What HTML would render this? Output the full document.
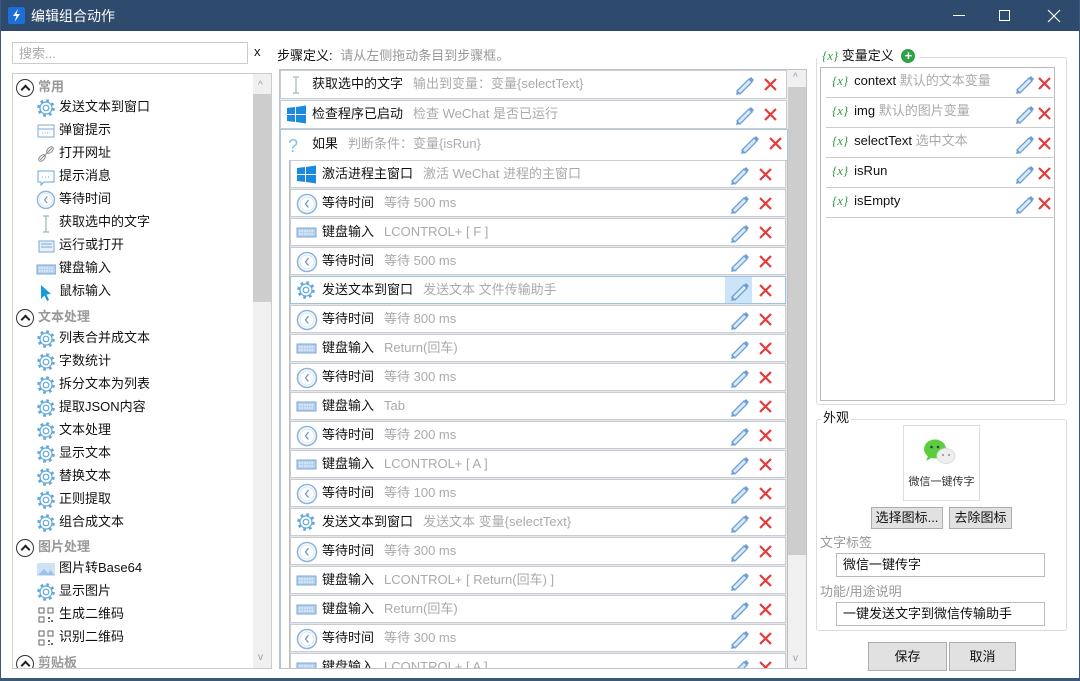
<!DOCTYPE html>
<html><head><meta charset="utf-8"><style>
*{box-sizing:border-box;margin:0;padding:0}
html,body{width:1080px;height:681px;overflow:hidden}
body{background:#fff;font-family:"Liberation Sans","Noto Sans CJK SC",sans-serif;font-size:13px;color:#111;position:relative}
.abs{position:absolute}
#frame{position:absolute;left:0;top:0;width:1080px;height:681px;border:1px solid #3b5878;border-top:none}
#title{position:absolute;left:0;top:0;width:1080px;height:31px;background:#2e4a6d;color:#fff;font-size:14px}
.li{position:absolute;left:36px;height:22px;line-height:22px;white-space:nowrap}
.li svg{vertical-align:middle;margin-right:3px}
.cat{position:absolute;left:16px;width:200px;height:22px;line-height:22px;color:#999;font-weight:bold;white-space:nowrap}
.cat i{display:inline-block;width:18px;height:18px;border:1.5px solid #333;border-radius:50%;vertical-align:middle;margin-right:4px;position:relative}
.cat i:after{content:"";position:absolute;left:5px;top:6px;width:5px;height:5px;border-left:2px solid #222;border-top:2px solid #222;transform:rotate(45deg)}
.row{position:absolute;height:28px;background:#fff;border:1px solid #c9cdd2;line-height:26px;white-space:nowrap}
.row .ic{position:absolute;left:5px;top:3px}
.row .t{position:absolute;left:31px}
.row .d{color:#aaa;margin-left:10px}
.row .p{position:absolute;top:3px}
.row .x{position:absolute;top:5px}
.var{position:absolute;left:826px;width:229px;height:30px;border-bottom:1px solid #ccc;line-height:26px;white-space:nowrap}
.var .b{color:#3a9a48;font-family:"Liberation Serif",serif;font-style:italic;margin:0 6px 0 6px}
.var .g{color:#aaa}
.btn{position:absolute;background:#e1e1e1;border:1px solid #adadad;text-align:center}
.inp{position:absolute;border:1px solid #bbb;background:#fff;padding-left:6px;line-height:21px;white-space:nowrap}
</style></head><body>
<svg width="0" height="0" style="position:absolute">
<defs>
<g id="pen"><path d="M3 17 L15 5 L18 8 L6 20 Z" fill="#dbe9f8" stroke="#6b9fd8" stroke-width="1.3"/><path d="M15 5 L17 3 L20 6 L18 8" fill="#6b9fd8"/><path d="M3 17 L2 21 L6 20" fill="#6b9fd8"/></g>
<g id="xx"><path d="M3 3 L14 14 M14 3 L3 14" stroke="#e53b3b" stroke-width="2.2"/></g>
<g id="clk"><circle cx="11" cy="11" r="9.5" fill="#fff" stroke="#8fb4dc" stroke-width="1.6"/><circle cx="11" cy="11" r="7" fill="none" stroke="#d6e5f4" stroke-width="1"/><path d="M12.5 7 L9.5 11 L12.5 14.5" fill="none" stroke="#6c92bb" stroke-width="1.2"/></g>
<g id="gear"><circle cx="10" cy="10" r="7.5" fill="none" stroke="#5fa8dc" stroke-width="2.6" stroke-dasharray="2.7 3.2"/><circle cx="10" cy="10" r="6" fill="#fff" stroke="#5fa8dc" stroke-width="1.2"/><circle cx="10" cy="10" r="2.8" fill="none" stroke="#5fa8dc" stroke-width="1.2"/></g>
<g id="kb"><rect x="1" y="6" width="19" height="9" fill="#b5d1ee" stroke="#7aa8d8"/><path d="M3 9h15M3 12h15" stroke="#fff" stroke-width="1" stroke-dasharray="1.5 1"/></g>
<g id="win"><path d="M1 4 L9 3 L9 10 L1 10 Z M10 3 L20 1.5 L20 10 L10 10 Z M1 11 L9 11 L9 18 L1 17 Z M10 11 L20 11 L20 19.5 L10 18 Z" fill="#1b8be0"/></g>
<g id="cur"><path d="M10 3 L10 19 M7 3 L13 3 M7 19 L13 19" stroke="#8aa" stroke-width="1"/></g>
</defs></svg>

<div id="title">
 <div class="abs" style="left:8px;top:7px;width:17px;height:17px;background:#1c6fd6;border-radius:2px"><svg width="17" height="17"><path d="M10 2 L5 9 L8.5 9 L6.5 15 L12 7 L8.5 7 Z" fill="#fff"/></svg></div>
 <div class="abs" style="left:31px;top:6px">编辑组合动作</div>
 <div class="abs" style="left:953px;top:15px;width:12px;height:1px;background:#fff"></div>
 <div class="abs" style="left:999px;top:10px;width:11px;height:11px;border:1px solid #fff"></div>
 <svg class="abs" style="left:1047px;top:9px" width="14" height="14"><path d="M1 1 L13 13 M13 1 L1 13" stroke="#fff" stroke-width="1.2"/></svg>
</div>
<div id="frame"></div>

<!-- left -->
<div class="inp" style="left:12px;top:42px;width:236px;height:22px;color:#aaa;border-color:#ccc">搜索...</div>
<div class="abs" style="left:254px;top:44px;font-size:13px">x</div>
<div class="abs" style="left:12px;top:73px;width:260px;height:596px;border:1px solid #ccc;overflow:hidden">
 <div class="abs" style="left:240px;top:0;width:18px;height:596px;background:#f0f0f0"></div>
 <div class="abs" style="left:240px;top:20px;width:18px;height:208px;background:#cdcdcd"></div>
 <div class="abs" style="left:245px;top:6px;color:#999;font-size:10px">^</div>
 <div class="abs" style="left:245px;top:578px;color:#999;font-size:10px">v</div>
</div>
<div class="abs" style="left:0;top:0;width:272px;height:668px;overflow:hidden">
<div class="cat" style="top:76px"><i></i>常用</div>
<div class="li" style="top:96px"><svg width="20" height="20"><use href="#gear"/></svg>发送文本到窗口</div>
<div class="li" style="top:119px"><svg width="20" height="20"><rect x="2" y="4" width="16" height="12" fill="#fff" stroke="#7aa8d8"/><path d="M2 8h16" stroke="#7aa8d8"/><path d="M6 12h8" stroke="#7aa8d8" stroke-dasharray="1 1.5"/></svg>弹窗提示</div>
<div class="li" style="top:142px"><svg width="20" height="20"><path d="M4 16 L16 4" stroke="#888" stroke-width="1"/><ellipse cx="6" cy="14" rx="4" ry="2.4" transform="rotate(-45 6 14)" fill="none" stroke="#888"/><ellipse cx="14" cy="6" rx="4" ry="2.4" transform="rotate(-45 14 6)" fill="none" stroke="#888"/></svg>打开网址</div>
<div class="li" style="top:165px"><svg width="20" height="20"><path d="M2 4h16v11H8l-3 3v-3H2z" fill="#fff" stroke="#5fa8dc"/><path d="M6 10h8" stroke="#5fa8dc" stroke-dasharray="1 2"/></svg>提示消息</div>
<div class="li" style="top:188px"><svg width="20" height="20"><use href="#clk" transform="scale(.9)"/></svg>等待时间</div>
<div class="li" style="top:211px"><svg width="20" height="20"><use href="#cur"/></svg>获取选中的文字</div>
<div class="li" style="top:234px"><svg width="20" height="20"><rect x="3" y="5" width="15" height="11" fill="#e8f1fa" stroke="#7aa8d8"/><path d="M5 8h11M5 11h11" stroke="#7aa8d8"/></svg>运行或打开</div>
<div class="li" style="top:257px"><svg width="20" height="20"><use href="#kb"/></svg>键盘输入</div>
<div class="li" style="top:280px"><svg width="20" height="20"><path d="M5 3 L5 17 L8.5 13.5 L11 19 L13 18 L10.5 12.5 L15 12 Z" fill="#1a9ad6"/></svg>鼠标输入</div>
<div class="cat" style="top:306px"><i></i>文本处理</div>
<div class="li" style="top:327px"><svg width="20" height="20"><use href="#gear"/></svg>列表合并成文本</div>
<div class="li" style="top:350px"><svg width="20" height="20"><use href="#gear"/></svg>字数统计</div>
<div class="li" style="top:373px"><svg width="20" height="20"><use href="#gear"/></svg>拆分文本为列表</div>
<div class="li" style="top:396px"><svg width="20" height="20"><use href="#gear"/></svg>提取JSON内容</div>
<div class="li" style="top:419px"><svg width="20" height="20"><use href="#gear"/></svg>文本处理</div>
<div class="li" style="top:442px"><svg width="20" height="20"><use href="#gear"/></svg>显示文本</div>
<div class="li" style="top:465px"><svg width="20" height="20"><use href="#gear"/></svg>替换文本</div>
<div class="li" style="top:488px"><svg width="20" height="20"><use href="#gear"/></svg>正则提取</div>
<div class="li" style="top:511px"><svg width="20" height="20"><use href="#gear"/></svg>组合成文本</div>
<div class="cat" style="top:536px"><i></i>图片处理</div>
<div class="li" style="top:557px"><svg width="20" height="20"><rect x="1" y="4" width="18" height="13" fill="#cfe2f5"/><path d="M2 16 L8 10 L12 14 L15 11 L18 16 Z" fill="#9cc2e8"/></svg>图片转Base64</div>
<div class="li" style="top:580px"><svg width="20" height="20"><use href="#gear"/></svg>显示图片</div>
<div class="li" style="top:603px"><svg width="20" height="20"><path d="M3 3h5v5H3zM12 3h5v5h-5zM3 12h5v5H3z" fill="none" stroke="#666"/><path d="M12 12h2v2h-2zM15 15h2v2h-2zM12 16h2v1h-2z" fill="#666"/></svg>生成二维码</div>
<div class="li" style="top:626px"><svg width="20" height="20"><path d="M3 3h5v5H3zM12 3h5v5h-5zM3 12h5v5H3z" fill="none" stroke="#666"/><path d="M12 12h2v2h-2zM15 15h2v2h-2zM12 16h2v1h-2z" fill="#666"/></svg>识别二维码</div>
<div class="cat" style="top:652px"><i></i>剪贴板</div>
</div>
<div class="abs" style="left:0;top:669px;width:1080px;height:12px;background:#fff"></div>
<div class="abs" style="left:0;top:678px;width:1080px;height:3px;background:#3b5878"></div>
<div class="abs" style="left:0;top:31px;width:1px;height:650px;background:#3b5878"></div>
<div class="abs" style="left:1079px;top:31px;width:1px;height:650px;background:#3b5878"></div>
<div class="abs" style="left:12px;top:668px;width:260px;height:1px;background:#ccc"></div>

<!-- middle -->
<div class="abs" style="left:277px;top:45px;white-space:nowrap">步骤定义: <span style="color:#999;margin-left:4px">请从左侧拖动条目到步骤框。</span></div>
<div class="abs" style="left:279px;top:69px;width:528px;height:600px;border:1px solid #bcc3ca;background:#e9eef3;overflow:hidden">
 <div class="abs" style="left:508px;top:0;width:18px;height:598px;background:#f0f0f0"></div>
 <div class="abs" style="left:508px;top:17px;width:18px;height:468px;background:#cdcdcd"></div>
 <div class="abs" style="left:513px;top:2px;color:#999;font-size:10px">^</div>
 <div class="abs" style="left:513px;top:583px;color:#999;font-size:10px">v</div>
 <div class="row" style="left:0;top:0;width:507px;height:29px"><svg class="ic" width="20" height="20"><use href="#cur"/></svg><span class="t">获取选中的文字<span class="d">输出到变量：变量{selectText}</span></span><svg class="p" style="left:453px" width="22" height="22"><use href="#pen"/></svg><svg class="x" style="left:481px" width="17" height="17"><use href="#xx"/></svg></div>
 <div class="row" style="left:0;top:30px;width:507px;height:29px"><svg class="ic" width="20" height="20"><use href="#win"/></svg><span class="t">检查程序已启动<span class="d">检查 WeChat 是否已运行</span></span><svg class="p" style="left:453px" width="22" height="22"><use href="#pen"/></svg><svg class="x" style="left:481px" width="17" height="17"><use href="#xx"/></svg></div>
 <div class="abs" style="left:0;top:59px;width:508px;height:560px;background:#fff;border:1px solid #a9c6da">
  <div class="abs" style="left:3px;top:2px;line-height:24px;white-space:nowrap"><svg width="20" height="20" style="vertical-align:middle"><text x="4" y="17" font-size="18" fill="#7cc4ea" font-family="Liberation Sans">?</text></svg><span style="margin-left:8px">如果</span><span style="color:#aaa;margin-left:10px">判断条件：变量{isRun}</span></div>
  <svg class="abs" style="left:458px;top:3px" width="22" height="22"><use href="#pen"/></svg><svg class="abs" style="left:486px;top:5px" width="17" height="17"><use href="#xx"/></svg>
  <div class="abs" style="left:8px;top:30px;width:499px;height:540px;background:#e4e8ec;border:1px solid #bbb"></div>
 </div>
 <div class="abs" style="left:10px;top:90px">
  <div class="row" style="left:0;top:0;width:496px"><svg class="ic" width="22" height="22"><use href="#win"/></svg><span class="t">激活进程主窗口<span class="d">激活 WeChat 进程的主窗口</span></span><svg class="p" style="left:438px" width="22" height="22"><use href="#pen"/></svg><svg class="x" style="left:466px" width="17" height="17"><use href="#xx"/></svg></div>
  <div class="row" style="left:0;top:29px;width:496px"><svg class="ic" width="22" height="22"><use href="#clk"/></svg><span class="t">等待时间<span class="d">等待 500 ms</span></span><svg class="p" style="left:438px" width="22" height="22"><use href="#pen"/></svg><svg class="x" style="left:466px" width="17" height="17"><use href="#xx"/></svg></div>
  <div class="row" style="left:0;top:58px;width:496px"><svg class="ic" width="22" height="22"><use href="#kb"/></svg><span class="t">键盘输入<span class="d">LCONTROL+ [ F ]</span></span><svg class="p" style="left:438px" width="22" height="22"><use href="#pen"/></svg><svg class="x" style="left:466px" width="17" height="17"><use href="#xx"/></svg></div>
  <div class="row" style="left:0;top:87px;width:496px"><svg class="ic" width="22" height="22"><use href="#clk"/></svg><span class="t">等待时间<span class="d">等待 500 ms</span></span><svg class="p" style="left:438px" width="22" height="22"><use href="#pen"/></svg><svg class="x" style="left:466px" width="17" height="17"><use href="#xx"/></svg></div>
  <div class="row" style="left:0;top:116px;width:496px;border-color:#9fc3dd"><div class="abs" style="left:434px;top:0;width:27px;height:26px;background:#cce4f7"></div><svg class="ic" width="22" height="22"><use href="#gear"/></svg><span class="t">发送文本到窗口<span class="d">发送文本 文件传输助手</span></span><svg class="p" style="left:438px" width="22" height="22"><use href="#pen"/></svg><svg class="x" style="left:466px" width="17" height="17"><use href="#xx"/></svg></div>
  <div class="row" style="left:0;top:145px;width:496px"><svg class="ic" width="22" height="22"><use href="#clk"/></svg><span class="t">等待时间<span class="d">等待 800 ms</span></span><svg class="p" style="left:438px" width="22" height="22"><use href="#pen"/></svg><svg class="x" style="left:466px" width="17" height="17"><use href="#xx"/></svg></div>
  <div class="row" style="left:0;top:174px;width:496px"><svg class="ic" width="22" height="22"><use href="#kb"/></svg><span class="t">键盘输入<span class="d">Return(回车)</span></span><svg class="p" style="left:438px" width="22" height="22"><use href="#pen"/></svg><svg class="x" style="left:466px" width="17" height="17"><use href="#xx"/></svg></div>
  <div class="row" style="left:0;top:203px;width:496px"><svg class="ic" width="22" height="22"><use href="#clk"/></svg><span class="t">等待时间<span class="d">等待 300 ms</span></span><svg class="p" style="left:438px" width="22" height="22"><use href="#pen"/></svg><svg class="x" style="left:466px" width="17" height="17"><use href="#xx"/></svg></div>
  <div class="row" style="left:0;top:232px;width:496px"><svg class="ic" width="22" height="22"><use href="#kb"/></svg><span class="t">键盘输入<span class="d">Tab</span></span><svg class="p" style="left:438px" width="22" height="22"><use href="#pen"/></svg><svg class="x" style="left:466px" width="17" height="17"><use href="#xx"/></svg></div>
  <div class="row" style="left:0;top:261px;width:496px"><svg class="ic" width="22" height="22"><use href="#clk"/></svg><span class="t">等待时间<span class="d">等待 200 ms</span></span><svg class="p" style="left:438px" width="22" height="22"><use href="#pen"/></svg><svg class="x" style="left:466px" width="17" height="17"><use href="#xx"/></svg></div>
  <div class="row" style="left:0;top:290px;width:496px"><svg class="ic" width="22" height="22"><use href="#kb"/></svg><span class="t">键盘输入<span class="d">LCONTROL+ [ A ]</span></span><svg class="p" style="left:438px" width="22" height="22"><use href="#pen"/></svg><svg class="x" style="left:466px" width="17" height="17"><use href="#xx"/></svg></div>
  <div class="row" style="left:0;top:319px;width:496px"><svg class="ic" width="22" height="22"><use href="#clk"/></svg><span class="t">等待时间<span class="d">等待 100 ms</span></span><svg class="p" style="left:438px" width="22" height="22"><use href="#pen"/></svg><svg class="x" style="left:466px" width="17" height="17"><use href="#xx"/></svg></div>
  <div class="row" style="left:0;top:348px;width:496px"><svg class="ic" width="22" height="22"><use href="#gear"/></svg><span class="t">发送文本到窗口<span class="d">发送文本 变量{selectText}</span></span><svg class="p" style="left:438px" width="22" height="22"><use href="#pen"/></svg><svg class="x" style="left:466px" width="17" height="17"><use href="#xx"/></svg></div>
  <div class="row" style="left:0;top:377px;width:496px"><svg class="ic" width="22" height="22"><use href="#clk"/></svg><span class="t">等待时间<span class="d">等待 300 ms</span></span><svg class="p" style="left:438px" width="22" height="22"><use href="#pen"/></svg><svg class="x" style="left:466px" width="17" height="17"><use href="#xx"/></svg></div>
  <div class="row" style="left:0;top:406px;width:496px"><svg class="ic" width="22" height="22"><use href="#kb"/></svg><span class="t">键盘输入<span class="d">LCONTROL+ [ Return(回车) ]</span></span><svg class="p" style="left:438px" width="22" height="22"><use href="#pen"/></svg><svg class="x" style="left:466px" width="17" height="17"><use href="#xx"/></svg></div>
  <div class="row" style="left:0;top:435px;width:496px"><svg class="ic" width="22" height="22"><use href="#kb"/></svg><span class="t">键盘输入<span class="d">Return(回车)</span></span><svg class="p" style="left:438px" width="22" height="22"><use href="#pen"/></svg><svg class="x" style="left:466px" width="17" height="17"><use href="#xx"/></svg></div>
  <div class="row" style="left:0;top:464px;width:496px"><svg class="ic" width="22" height="22"><use href="#clk"/></svg><span class="t">等待时间<span class="d">等待 300 ms</span></span><svg class="p" style="left:438px" width="22" height="22"><use href="#pen"/></svg><svg class="x" style="left:466px" width="17" height="17"><use href="#xx"/></svg></div>
  <div class="row" style="left:0;top:493px;width:496px"><svg class="ic" width="22" height="22"><use href="#kb"/></svg><span class="t">键盘输入<span class="d">LCONTROL+ [ A ]</span></span><svg class="p" style="left:438px" width="22" height="22"><use href="#pen"/></svg><svg class="x" style="left:466px" width="17" height="17"><use href="#xx"/></svg></div>
 </div>
</div>

<!-- right -->
<div class="abs" style="left:816px;top:57px;width:251px;height:348px;border:1px solid #ddd;border-radius:3px"></div>
<div class="abs" style="left:820px;top:67px;width:235px;height:334px;border:1px solid #bbb"></div>
<div class="abs" style="left:818px;top:46px;background:#fff;padding:0 4px;line-height:20px;white-space:nowrap"><span style="color:#3a9a48;font-family:'Liberation Serif',serif;font-style:italic">{x}</span> 变量定义 <span style="display:inline-block;width:14px;height:14px;border-radius:50%;background:#2fa14a;color:#fff;font-weight:bold;text-align:center;line-height:14px;font-size:13px;margin-left:4px">+</span></div>
<div class="var" style="top:68px"><span class="b">{x}</span>context <span class="g">默认的文本变量</span><svg class="abs" style="left:188px;top:5px" width="22" height="22"><use href="#pen"/></svg><svg class="abs" style="left:210px;top:7px" width="17" height="17"><use href="#xx"/></svg></div>
<div class="var" style="top:98px"><span class="b">{x}</span>img <span class="g">默认的图片变量</span><svg class="abs" style="left:188px;top:5px" width="22" height="22"><use href="#pen"/></svg><svg class="abs" style="left:210px;top:7px" width="17" height="17"><use href="#xx"/></svg></div>
<div class="var" style="top:128px"><span class="b">{x}</span>selectText <span class="g">选中文本</span><svg class="abs" style="left:188px;top:5px" width="22" height="22"><use href="#pen"/></svg><svg class="abs" style="left:210px;top:7px" width="17" height="17"><use href="#xx"/></svg></div>
<div class="var" style="top:158px"><span class="b">{x}</span>isRun<svg class="abs" style="left:188px;top:5px" width="22" height="22"><use href="#pen"/></svg><svg class="abs" style="left:210px;top:7px" width="17" height="17"><use href="#xx"/></svg></div>
<div class="var" style="top:188px"><span class="b">{x}</span>isEmpty<svg class="abs" style="left:188px;top:5px" width="22" height="22"><use href="#pen"/></svg><svg class="abs" style="left:210px;top:7px" width="17" height="17"><use href="#xx"/></svg></div>

<div class="abs" style="left:816px;top:419px;width:251px;height:212px;border:1px solid #ddd;border-radius:3px"></div>
<div class="abs" style="left:821px;top:409px;background:#fff;padding:0 2px;line-height:18px">外观</div>
<div class="abs" style="left:903px;top:425px;width:77px;height:76px;border:1px solid #ddd;background:#fff">
 <svg class="abs" style="left:19px;top:12px" width="36" height="30"><ellipse cx="12" cy="11" rx="11" ry="9.5" fill="#5ccd3c"/><path d="M5 18 L3 23 L10 19" fill="#5ccd3c"/><circle cx="8.5" cy="9" r="1.3" fill="#245"/><circle cx="15" cy="9" r="1.3" fill="#245"/><ellipse cx="23" cy="18" rx="9" ry="7.5" fill="#eee" stroke="#ddd"/><circle cx="20" cy="17" r="1" fill="#889"/><circle cx="26" cy="17" r="1" fill="#889"/></svg>
 <div class="abs" style="left:0;top:47px;width:75px;text-align:center;font-size:11px;color:#333;white-space:nowrap">微信一键传字</div>
</div>
<div class="btn" style="left:871px;top:507px;width:72px;height:22px;line-height:20px;white-space:nowrap">选择图标...</div>
<div class="btn" style="left:949px;top:507px;width:63px;height:22px;line-height:20px;white-space:nowrap">去除图标</div>
<div class="abs" style="left:820px;top:532px;color:#999">文字标签</div>
<div class="inp" style="left:836px;top:553px;width:209px;height:24px">微信一键传字</div>
<div class="abs" style="left:820px;top:581px;color:#999;white-space:nowrap">功能/用途说明</div>
<div class="inp" style="left:836px;top:602px;width:209px;height:24px">一键发送文字到微信传输助手</div>
<div class="btn" style="left:868px;top:642px;width:79px;height:29px;line-height:27px">保存</div>
<div class="btn" style="left:949px;top:642px;width:67px;height:29px;line-height:27px">取消</div>
</body></html>
